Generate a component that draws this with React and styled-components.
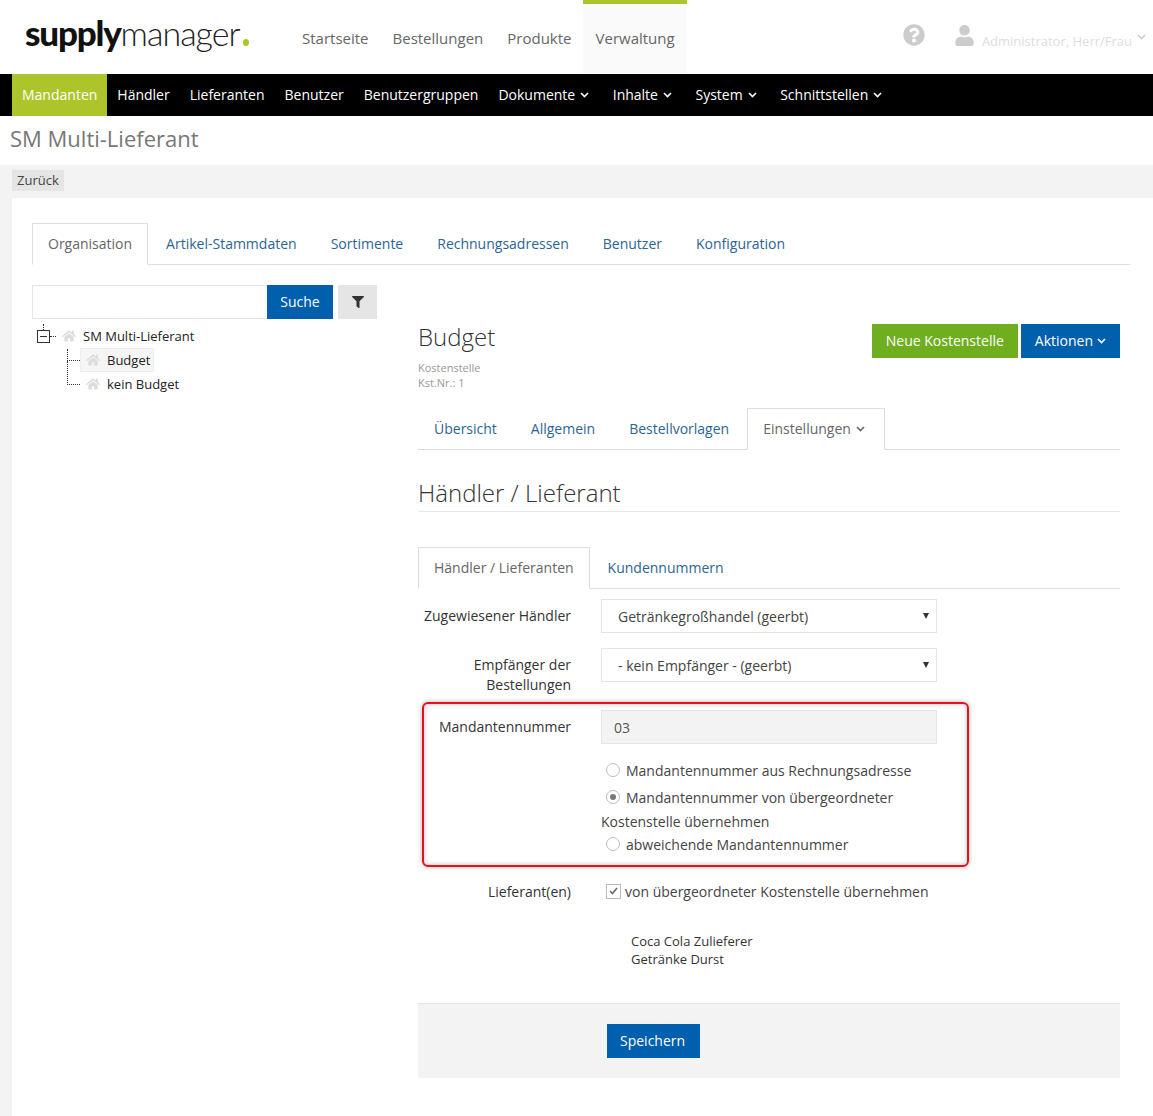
import React from 'react';
import styled, { createGlobalStyle } from 'styled-components';
import { FaHome, FaFilter, FaQuestionCircle, FaUser } from 'react-icons/fa';

const GlobalStyle = createGlobalStyle`
  html, body { margin: 0; padding: 0; background: #f3f3f3; }
  body { font-family: "Open Sans", "Liberation Sans", sans-serif; font-size: 14px; color: #333; overflow: hidden; }
  * { box-sizing: border-box; }
`;

const Page = styled.div`
  width: 1153px;
  height: 1116px;
  overflow: hidden;
  display: flex;
  flex-direction: column;
`;

const Header = styled.header`
  height: 74px;
  background: #fff;
  display: flex;
  flex-shrink: 0;
`;

const Logo = styled.div`
  width: 290px;
  display: flex;
  align-items: baseline;
  padding: 12px 0 0 25px;
  font-family: Lato, sans-serif;
  font-size: 34px;
  line-height: 40px;
  letter-spacing: -1px;
  color: #222;
  font-weight: 300;
  b { font-size: 35px; font-weight: 900; letter-spacing: -1.2px; color: #111; }
`;

const LogoDot = styled.span`
  width: 6px;
  height: 7px;
  margin-left: 4px;
  border-radius: 50%;
  background: #adc52a;
`;

const TopNav = styled.nav`
  display: flex;
`;

const TopLink = styled.a`
  display: block;
  padding: ${p => (p.$active ? '24px 12px 0 13px' : '28px 12px 0')};
  margin-left: ${p => (p.$active ? '-1px' : '0')};
  width: ${p => (p.$active ? '104px' : 'auto')};
  font-size: 15px;
  line-height: 20px;
  color: #666;
  background: ${p => (p.$active ? '#fafafa' : 'transparent')};
  border-top: ${p => (p.$active ? '4px solid #adc52a' : 'none')};
`;

const UserArea = styled.div`
  margin-left: auto;
  display: flex;
  color: #ccc;
`;

const HelpIcon = styled(FaQuestionCircle)`
  font-size: 22px;
  margin: 24px 29px 0 0;
`;

const UserIcon = styled(FaUser)`
  font-size: 21px;
  margin: 25px 7px 0 0;
`;

const UserName = styled.span`
  margin-top: 32px;
  font-size: 13px;
  line-height: 18px;
  color: #ddd;
`;

const ChevronSvg = styled.svg`
  width: 9px;
  height: 6px;
  flex-shrink: 0;
  fill: none;
  stroke: currentColor;
  stroke-width: 1.6;
  margin-top: 2px;
  margin-left: ${p => p.$left ?? 5}px;
  margin-right: ${p => p.$right ?? 0}px;
`;

const Chevron = ({ left, right }) => (
  <ChevronSvg viewBox="0 0 9 6" $left={left} $right={right}>
    <polyline points="1,1 4.5,4.5 8,1" />
  </ChevronSvg>
);

const UserCaret = styled.span`
  display: block;
  margin: 32px 7px 0 0;
  line-height: 0;
`;

const MainNav = styled.nav`
  height: 42px;
  background: #000;
  padding-left: 12px;
  display: flex;
  flex-shrink: 0;
`;

const MainLink = styled.a`
  display: flex;
  align-items: center;
  padding: 0 10px 2px;
  font-size: 14px;
  color: #fff;
  background: ${p => (p.$active ? '#adc52a' : 'transparent')};
`;

const TitleBar = styled.div`
  height: 49px;
  background: #fff;
  padding: 6px 0 0 10px;
  flex-shrink: 0;
`;

const Title = styled.h1`
  margin: 0;
  font-size: 22px;
  font-weight: 400;
  line-height: 32px;
  color: #777;
`;

const Toolbar = styled.div`
  height: 33px;
  padding: 5px 0 0 12px;
  flex-shrink: 0;
`;

const BackButton = styled.a`
  display: inline-block;
  height: 21px;
  line-height: 21px;
  padding: 0 5px;
  font-size: 13px;
  background: #e5e5e5;
  color: #444;
`;

const Panel = styled.main`
  flex: 1;
  margin-left: 12px;
  background: #fff;
  padding: 25px 23px 0 20px;
`;

const TabRow = styled.div`
  display: flex;
  height: 42px;
  border-bottom: 1px solid #ddd;
`;

const Tab = styled.a`
  display: flex;
  align-items: center;
  height: 42px;
  margin-right: 2px;
  padding: 0 15px 2px;
  font-size: 14px;
  color: ${p => (p.$active ? '#666' : '#2b6593')};
  background: ${p => (p.$active ? '#fff' : 'transparent')};
  border: 1px solid ${p => (p.$active ? '#ddd' : 'transparent')};
  border-bottom-color: ${p => (p.$active ? '#fff' : 'transparent')};
`;

const Columns = styled.div`
  display: grid;
  grid-template-columns: 345px 702px;
  column-gap: 41px;
  padding-top: 20px;
`;

const SearchRow = styled.div`
  display: flex;
  height: 34px;
`;

const SearchInput = styled.div`
  width: 235px;
  border: 1px solid #e5e5e5;
  border-right: none;
`;

const SearchButton = styled.a`
  width: 66px;
  background: #0060ae;
  color: #fff;
  font-size: 14px;
  line-height: 34px;
  text-align: center;
`;

const FilterButton = styled.a`
  width: 39px;
  margin-left: 5px;
  background: #e5e5e5;
  color: #333;
  display: flex;
  align-items: center;
  justify-content: center;
  font-size: 12px;
`;

const Tree = styled.div`
  padding-top: 5px;
  font-size: 13px;
  color: #222;
`;

const TreeRow = styled.div`
  display: flex;
  align-items: center;
  height: 24px;
  padding-left: ${p => p.$indent}px;
`;

const Toggle = styled.span`
  width: 13px;
  height: 13px;
  border: 1px solid #333;
  position: relative;
  &::after {
    content: '';
    position: absolute;
    left: 2px;
    right: 2px;
    top: 5px;
    height: 1px;
    background: #333;
  }
  &::before {
    content: '';
    position: absolute;
    left: 5px;
    top: -7px;
    height: 6px;
    border-left: 1px dotted #333;
  }
`;

const Dots = styled.span`
  width: ${p => p.$width}px;
  border-top: 1px dotted #333;
`;

const Elbow = styled.span`
  width: 13px;
  height: ${p => p.$height}px;
  margin-top: ${p => -p.$height + 1}px;
  border-left: 1px dotted #333;
  border-bottom: 1px dotted #333;
`;

const TreeLabel = styled.span`
  display: flex;
  align-items: center;
  height: 24px;
  padding: 0 3px 0 5px;
  border: 1px solid ${p => (p.$selected ? '#eee' : 'transparent')};
  background: ${p => (p.$selected ? '#f5f5f5' : 'transparent')};
  svg { color: #ddd; font-size: 14px; margin-right: 7px; }
`;

const DetailPane = styled.section`
  padding-top: 39px;
`;

const DetailHead = styled.div`
  display: flex;
  justify-content: space-between;
`;

const DetailTitle = styled.h2`
  margin: -1px 0 0;
  font-size: 24px;
  font-weight: 300;
  line-height: 28px;
  color: #333;
`;

const Meta = styled.div`
  margin-top: 9px;
  font-size: 11px;
  line-height: 15px;
  color: #999;
`;

const Actions = styled.div`
  display: flex;
  gap: 3px;
`;

const ActionButton = styled.a`
  display: flex;
  align-items: center;
  height: 34px;
  padding: 0 14px 2px;
  color: #fff;
  font-size: 14px;
  background: ${p => p.$color};
`;

const DetailTabs = styled(TabRow)`
  margin-top: 18px;
`;

const SectionTitle = styled.h3`
  margin: 27px 0 0;
  padding-bottom: 2px;
  font-size: 24px;
  font-weight: 300;
  line-height: 32px;
  color: #333;
  border-bottom: 1px solid #e8e8e8;
`;

const FormTabs = styled(TabRow)`
  margin-top: 35px;
`;

const Form = styled.div`
  position: relative;
`;

const FormRow = styled.div`
  display: grid;
  grid-template-columns: 153px 336px;
  column-gap: 30px;
  margin-top: ${p => p.$top}px;
`;

const Label = styled.label`
  text-align: right;
  font-size: 14px;
  line-height: 20px;
  padding-top: ${p => p.$top ?? 7}px;
  color: #333;
`;

const SelectBox = styled.div`
  position: relative;
  height: 34px;
  padding-left: 16px;
  font-size: 14px;
  line-height: 34px;
  color: #444;
  border: 1px solid #e5e5e5;
  &::after {
    content: '';
    position: absolute;
    right: 7px;
    top: 13px;
    border-left: 3px solid transparent;
    border-right: 3px solid transparent;
    border-top: 6px solid #333;
  }
`;

const ReadOnlyInput = styled.div`
  height: 34px;
  padding-left: 12px;
  font-size: 14px;
  line-height: 33px;
  color: #555;
  background: #f3f3f3;
  border: 1px solid #e5e5e5;
`;

const Option = styled.div`
  display: flex;
  align-items: center;
  height: 22px;
  margin-top: ${p => p.$top}px;
  padding-left: 5px;
  font-size: 14px;
  color: #444;
`;

const Radio = styled.span`
  width: 14px;
  height: 14px;
  margin-right: 6px;
  border: 1px solid #bbb;
  border-radius: 50%;
  display: flex;
  align-items: center;
  justify-content: center;
  &::after {
    content: '';
    display: ${p => (p.$checked ? 'block' : 'none')};
    width: 6px;
    height: 6px;
    border-radius: 50%;
    background: #777;
  }
`;

const CheckBox = styled.span`
  width: 15px;
  height: 15px;
  margin-right: 4px;
  border: 1px solid #bbb;
  display: flex;
  align-items: center;
  justify-content: center;
  color: #666;
`;

const CheckMark = styled.svg`
  width: 9px;
  height: 8px;
  fill: none;
  stroke: currentColor;
  stroke-width: 1.6;
`;

const OptionNote = styled.div`
  height: 22px;
  margin-top: 3px;
  font-size: 14px;
  line-height: 22px;
  color: #444;
`;

const Suppliers = styled.div`
  margin: 30px 0 0 213px;
  font-size: 13px;
  line-height: 18px;
  color: #333;
`;

const FormFooter = styled.div`
  height: 75px;
  margin-top: 35px;
  padding: 20px 0 0 189px;
  background: #f3f3f3;
  border-top: 1px solid #e5e5e5;
`;

const SaveButton = styled.a`
  display: inline-block;
  height: 34px;
  padding: 0 15px 0 13px;
  line-height: 34px;
  font-size: 14px;
  color: #fff;
  background: #0060ae;
`;

const Highlight = styled.div`
  position: absolute;
  left: 4px;
  top: 103px;
  width: 547px;
  height: 165px;
  border: 2px solid #e8101c;
  border-radius: 6px;
  box-shadow: 0 0 5px rgba(0, 0, 0, 0.3), inset 0 0 5px rgba(0, 0, 0, 0.25);
  pointer-events: none;
`;

export default function App() {
  return (
    <Page>
      <GlobalStyle />
      <Header>
        <Logo><b>supply</b>manager<LogoDot /></Logo>
        <TopNav>
          <TopLink>Startseite</TopLink>
          <TopLink>Bestellungen</TopLink>
          <TopLink>Produkte</TopLink>
          <TopLink $active>Verwaltung</TopLink>
        </TopNav>
        <UserArea>
          <HelpIcon />
          <UserIcon />
          <UserName>Administrator, Herr/Frau</UserName>
          <UserCaret><Chevron /></UserCaret>
        </UserArea>
      </Header>
      <MainNav>
        <MainLink $active>Mandanten</MainLink>
        <MainLink>Händler</MainLink>
        <MainLink>Lieferanten</MainLink>
        <MainLink>Benutzer</MainLink>
        <MainLink>Benutzergruppen</MainLink>
        <MainLink>Dokumente<Chevron right={3.5} /></MainLink>
        <MainLink>Inhalte<Chevron right={3.5} /></MainLink>
        <MainLink>System<Chevron right={3.5} /></MainLink>
        <MainLink>Schnittstellen<Chevron right={3.5} /></MainLink>
      </MainNav>
      <TitleBar><Title>SM Multi-Lieferant</Title></TitleBar>
      <Toolbar><BackButton>Zurück</BackButton></Toolbar>
      <Panel>
        <TabRow>
          <Tab $active>Organisation</Tab>
          <Tab>Artikel-Stammdaten</Tab>
          <Tab>Sortimente</Tab>
          <Tab>Rechnungsadressen</Tab>
          <Tab>Benutzer</Tab>
          <Tab>Konfiguration</Tab>
        </TabRow>
        <Columns>
          <aside>
            <SearchRow>
              <SearchInput />
              <SearchButton>Suche</SearchButton>
              <FilterButton><FaFilter /></FilterButton>
            </SearchRow>
            <Tree>
              <TreeRow $indent={5}>
                <Toggle />
                <Dots $width={6} />
                <TreeLabel><FaHome />SM Multi-Lieferant</TreeLabel>
              </TreeRow>
              <TreeRow $indent={35}>
                <Elbow $height={12} />
                <TreeLabel $selected><FaHome />Budget</TreeLabel>
              </TreeRow>
              <TreeRow $indent={35}>
                <Elbow $height={24} />
                <TreeLabel><FaHome />kein Budget</TreeLabel>
              </TreeRow>
            </Tree>
          </aside>
          <DetailPane>
            <DetailHead>
              <div>
                <DetailTitle>Budget</DetailTitle>
                <Meta>Kostenstelle<br />Kst.Nr.: 1</Meta>
              </div>
              <Actions>
                <ActionButton $color="#6fae1e">Neue Kostenstelle</ActionButton>
                <ActionButton $color="#0060ae">Aktionen<Chevron left={4} /></ActionButton>
              </Actions>
            </DetailHead>
            <DetailTabs>
              <Tab>Übersicht</Tab>
              <Tab>Allgemein</Tab>
              <Tab>Bestellvorlagen</Tab>
              <Tab $active>Einstellungen<Chevron right={4} /></Tab>
            </DetailTabs>
            <SectionTitle>Händler / Lieferant</SectionTitle>
            <FormTabs>
              <Tab $active>Händler / Lieferanten</Tab>
              <Tab>Kundennummern</Tab>
            </FormTabs>
            <Form>
              <FormRow $top={10}>
                <Label>Zugewiesener Händler</Label>
                <SelectBox>Getränkegroßhandel (geerbt)</SelectBox>
              </FormRow>
              <FormRow $top={15}>
                <Label>Empfänger der Bestellungen</Label>
                <SelectBox>- kein Empfänger - (geerbt)</SelectBox>
              </FormRow>
              <FormRow $top={15}>
                <Label>Mandantennummer</Label>
                <div>
                  <ReadOnlyInput>03</ReadOnlyInput>
                  <Option $top={15}><Radio />Mandantennummer aus Rechnungsadresse</Option>
                  <Option $top={5}><Radio $checked />Mandantennummer von übergeordneter</Option>
                  <OptionNote>Kostenstelle übernehmen</OptionNote>
                  <Option $top={0}><Radio />abweichende Mandantennummer</Option>
                </div>
              </FormRow>
              <FormRow $top={25}>
                <Label $top={2}>Lieferant(en)</Label>
                <Option $top={0}>
                  <CheckBox>
                    <CheckMark viewBox="0 0 9 8"><polyline points="1,4 3.5,6.5 8,1" /></CheckMark>
                  </CheckBox>
                  von übergeordneter Kostenstelle übernehmen
                </Option>
              </FormRow>
              <Suppliers>Coca Cola Zulieferer<br />Getränke Durst</Suppliers>
              <Highlight />
            </Form>
            <FormFooter><SaveButton>Speichern</SaveButton></FormFooter>
          </DetailPane>
        </Columns>
      </Panel>
    </Page>
  );
}
